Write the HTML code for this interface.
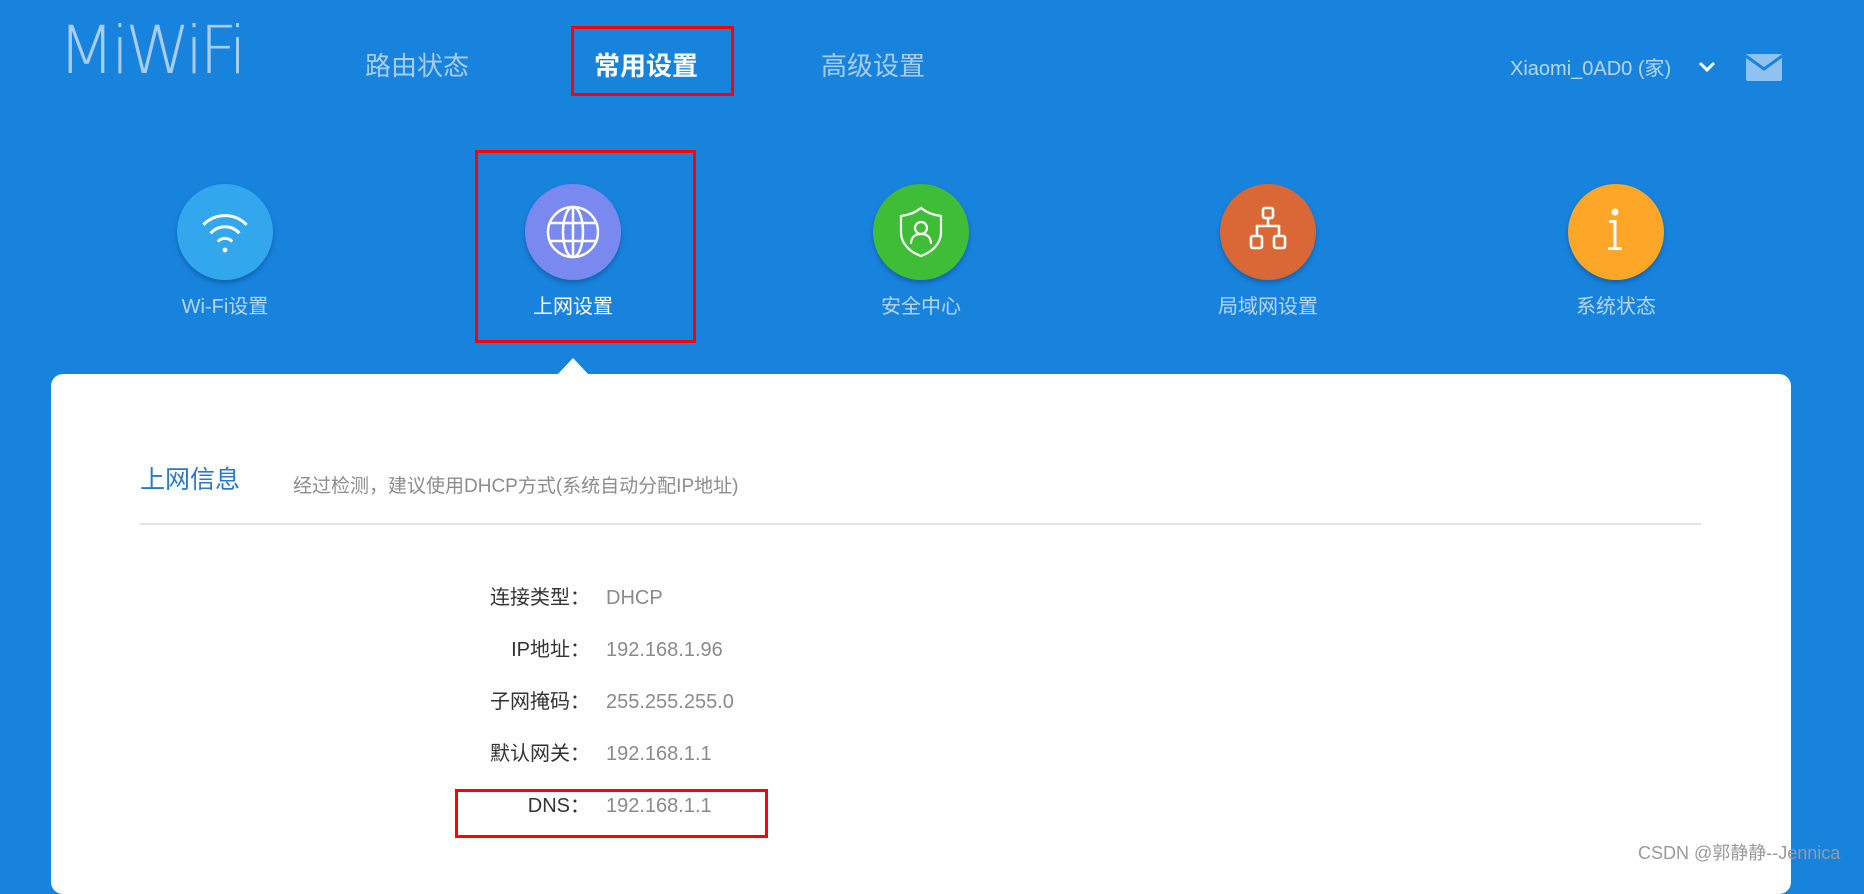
<!DOCTYPE html>
<html><head><meta charset="utf-8"><style>
*{margin:0;padding:0;box-sizing:border-box}
body{width:1864px;height:873px;overflow:hidden;background:#1883dd;font-family:"Liberation Sans","Noto Sans CJK SC",sans-serif;position:relative}
.a{position:absolute;white-space:nowrap}
.nav{font-size:26px;color:#a9cdf0;top:48px;line-height:36px}
.circ{position:absolute;width:96px;height:96px;border-radius:50%;top:184px;box-shadow:0 3px 5px rgba(0,40,90,.35);display:flex;align-items:center;justify-content:center}
.lbl{position:absolute;top:294px;font-size:20px;color:#b7d6f3;width:200px;text-align:center;line-height:26px}
.red{position:absolute;border:3px solid #f00}
.row{position:absolute;left:0;width:1000px;height:26px;font-size:20px;line-height:26px}
.k{position:absolute;right:410px;color:#333;white-space:nowrap}
.v{position:absolute;left:606px;color:#8a8a8a;white-space:nowrap}
</style></head><body>
<div class="a" style="left:58px;top:14px;font-size:66px;color:#a9cdf0;line-height:74px;font-family:'DejaVu Sans',sans-serif;font-weight:200;letter-spacing:-4px">MiWiFi</div>
<div class="a nav" style="left:365px">路由状态</div>
<div class="a nav" style="left:594px;color:#fff;font-weight:bold">常用设置</div>
<div class="a nav" style="left:821px">高级设置</div>
<div class="red" style="left:571px;top:26px;width:163px;height:70px"></div>
<div class="a" style="left:1510px;top:56px;font-size:20px;color:#b7d6f3;line-height:26px">Xiaomi_0AD0 (家)</div>
<svg class="a" style="left:1698px;top:60px" width="18" height="14"><path d="M2 3l7 7 7-7" stroke="#fff" stroke-width="3" fill="none"/></svg>
<svg class="a" style="left:1746px;top:54px" width="36" height="27"><rect width="36" height="27" rx="2" fill="#8fc2f0"/><path d="M0 2l18 13 18-13" stroke="#1883dd" stroke-width="3" fill="none"/></svg>

<div class="circ" style="left:177px;background:#33a7ee"><svg width="60" height="60" viewBox="0 0 50 50" fill="none" stroke="#fff" stroke-width="2.5"><path d="M7 19a25 25 0 0 1 36 0M13 26a16 16 0 0 1 24 0M19 33a8 8 0 0 1 12 0"/><circle cx="25" cy="40" r="2" fill="#fff" stroke="none"/></svg></div>
<div class="lbl" style="left:125px">Wi-Fi设置</div>
<div class="circ" style="left:525px;background:#7a89ef"><svg width="56" height="56" viewBox="0 0 56 56" fill="none" stroke="#fff" stroke-width="2.5"><circle cx="28" cy="28" r="25"/><ellipse cx="28" cy="28" rx="10" ry="25"/><path d="M28 3v50M5 19h46M5 37h46"/></svg></div>
<div class="lbl" style="left:473px;color:#fff">上网设置</div>
<div class="red" style="left:475px;top:150px;width:221px;height:193px"></div>
<div class="circ" style="left:873px;background:#40bd36"><svg width="50" height="56" viewBox="0 0 50 56" fill="none" stroke="#fff" stroke-width="2.2"><path d="M25 4c6 5 12 7 20 8v16c0 12-9 20-20 24C14 48 5 40 5 28V12c8-1 14-3 20-8z"/><circle cx="25" cy="24" r="6"/><path d="M15 40c0-7 4-10 10-10s10 3 10 10"/></svg></div>
<div class="lbl" style="left:821px">安全中心</div>
<div class="circ" style="left:1220px;background:#d96836"><svg width="50" height="56" viewBox="0 0 50 56" fill="none" stroke="#fff" stroke-width="2.6"><rect x="20" y="4" width="10" height="10" rx="2"/><path d="M25 14v8M14 32v-10h22v10"/><rect x="8" y="32" width="11" height="12" rx="2"/><rect x="31" y="32" width="11" height="12" rx="2"/></svg></div>
<div class="lbl" style="left:1168px">局域网设置</div>
<div class="circ" style="left:1568px;background:#fea628"><svg width="40" height="56" viewBox="0 0 40 56" fill="#fff"><circle cx="19" cy="8" r="3.5"/><rect x="17.5" y="16" width="3" height="28"/><rect x="12" y="43" width="14" height="3"/><rect x="13" y="16" width="6" height="3"/></svg></div>
<div class="lbl" style="left:1516px">系统状态</div>

<div class="a" style="left:557px;top:358px;width:0;height:0;border-left:16px solid transparent;border-right:16px solid transparent;border-bottom:17px solid #fff"></div>
<div class="a" style="left:51px;top:374px;width:1740px;height:520px;background:#fff;border-radius:12px"></div>
<div class="a" style="left:140px;top:464px;font-size:25px;color:#2779cc;line-height:32px">上网信息</div>
<div class="a" style="left:293px;top:474px;font-size:19px;color:#8c8c8c;line-height:26px">经过检测，建议使用DHCP方式(系统自动分配IP地址)</div>
<div class="a" style="left:140px;top:523px;width:1561px;height:2px;background:#e3e3e3"></div>

<div class="row" style="top:585px"><span class="k">连接类型：</span><span class="v">DHCP</span></div>
<div class="row" style="top:637px"><span class="k">IP地址：</span><span class="v">192.168.1.96</span></div>
<div class="row" style="top:689px"><span class="k">子网掩码：</span><span class="v">255.255.255.0</span></div>
<div class="row" style="top:741px"><span class="k">默认网关：</span><span class="v">192.168.1.1</span></div>
<div class="row" style="top:793px"><span class="k">DNS：</span><span class="v">192.168.1.1</span></div>
<div class="red" style="left:455px;top:789px;width:313px;height:49px"></div>
<div class="a" style="left:1638px;top:842px;font-size:18px;color:#999;line-height:22px">CSDN @郭静静--Jennica</div>
</body></html>
